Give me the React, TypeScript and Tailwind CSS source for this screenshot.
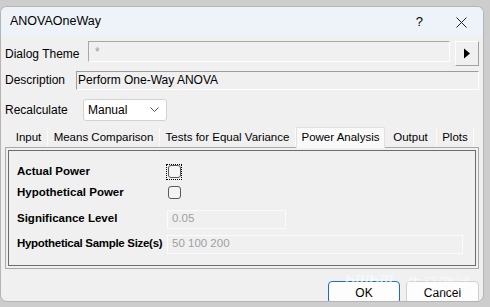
import React from 'react';

const font = { fontFamily: '"Liberation Sans", Arial, sans-serif' };

const tabs = [
  { label: 'Input', w: 'w-[38px]' },
  { label: 'Means Comparison', w: 'w-[112px]' },
  { label: 'Tests for Equal Variance', w: 'w-[136px]' },
  { label: 'Power Analysis', w: 'w-[89px]' },
  { label: 'Output', w: 'w-[52px]' },
  { label: 'Plots', w: 'w-[37px]' },
];

const Checkbox: React.FC<{ focused?: boolean }> = ({ focused }) => (
  <div className={`w-[16px] h-[16px] flex items-center justify-center ${focused ? 'outline-1 outline-dotted outline-black -outline-offset-1' : ''}`}>
    <div className="w-[13px] h-[13px] rounded-[3px] border border-[#5a5a5a] bg-[#f4f4f4]" />
  </div>
);

export default function App() {
  return (
    <div className="w-[490px] h-[307px] bg-[#cdcdcd] pt-[6px] overflow-hidden text-[12px] text-black" style={font}>
      <div className="relative w-[484px] h-[296px] bg-[#f0f0f0] rounded-t-[7px] rounded-b-[7px] border border-[#b4b4b4] flex flex-col overflow-hidden">
        {/* title bar */}
        <div className="h-[29px] bg-[#eef3f9] flex items-center pl-[9px] pr-[16px] shrink-0">
          <span className="text-[12.5px]">ANOVAOneWay</span>
          <span className="ml-auto text-[13px] mr-[33px]">?</span>
          <svg width="11" height="11" viewBox="0 0 11 11" className="mt-[1px]">
            <path d="M0.5 0.5 L10.5 10.5 M10.5 0.5 L0.5 10.5" stroke="#222" strokeWidth="1" />
          </svg>
        </div>

        <div className="flex flex-col px-[4px] pt-[5px] grow">
          {/* dialog theme */}
          <div className="flex items-start h-[26px]">
            <span className="w-[83px] pt-[4px] whitespace-nowrap">Dialog Theme</span>
            <div className="w-[362px] h-[21px] border border-[#a8a8a8] border-r-white border-b-white bg-[#f0f0f0] flex items-center px-[6px] text-[#9a9a9a]">
              *
            </div>
            <div className="ml-[5px] w-[24px] h-[25px] border border-[#a0a0a0] border-t-white border-l-white bg-[#f0f0f0] flex items-center justify-center">
              <svg width="8" height="11" viewBox="0 0 8 11">
                <path d="M1 0.5 L7 5.5 L1 10.5 Z" fill="#000" />
              </svg>
            </div>
          </div>

          {/* description */}
          <div className="flex items-center h-[20px] mt-[3px]">
            <span className="w-[71px]">Description</span>
            <div className="w-[403px] h-[19px] border border-[#9c9c9c] border-r-white border-b-white bg-[#f0f0f0] flex items-center px-[1px]">
              Perform One-Way ANOVA
            </div>
          </div>

          {/* recalculate */}
          <div className="flex items-center h-[23px] mt-[8px]">
            <span className="w-[78px]">Recalculate</span>
            <div className="w-[84px] h-[22px] rounded-[3px] border border-[#d2d2d2] bg-white flex items-center pl-[4px] pr-[7px]">
              <span>Manual</span>
              <svg width="9" height="6" viewBox="0 0 9 6" className="ml-auto">
                <path d="M0.5 0.5 L4.5 4.5 L8.5 0.5" stroke="#555" fill="none" strokeWidth="1" />
              </svg>
            </div>
          </div>

          {/* tabs */}
          <div className="flex items-end h-[22px] mt-[4px] pl-[5px] text-[11.5px]">
            {tabs.map((t) => {
              const active = t.label === 'Power Analysis';
              return (
                <div
                  key={t.label}
                  className={`${t.w} shrink-0 whitespace-nowrap flex items-center justify-center ${
                    active
                      ? 'h-[21px] bg-[#f9f9f9] border border-b-0 border-[#e2e2e2] relative top-[1px]'
                      : 'h-[19px] border-r border-[#fafafa]'
                  }`}
                >
                  {t.label}
                </div>
              );
            })}
          </div>

          {/* panel */}
          <div className="w-[474px] h-[122px] border border-[#a9a9a9] p-[2px]">
            <div className="w-full h-full border border-[#6c6c6c] flex flex-col pl-[8px] pt-[10px] font-bold text-[11.5px]">
              <div className="flex items-center h-[21px]">
                <span className="w-[149px] whitespace-nowrap">Actual Power</span>
                <Checkbox focused />
              </div>
              <div className="flex items-center h-[21px]">
                <span className="w-[149px] whitespace-nowrap">Hypothetical Power</span>
                <Checkbox />
              </div>
              <div className="flex items-center h-[20px] mt-[6px]">
                <span className="w-[150px] whitespace-nowrap">Significance Level</span>
                <div className="w-[119px] h-[19px] border border-[#fbfbfb] flex items-center pl-[4px] font-normal text-[#9f9f9f]">
                  0.05
                </div>
              </div>
              <div className="flex items-center h-[20px] mt-[5px]">
                <span className="w-[150px] whitespace-nowrap tracking-[-0.3px]">Hypothetical Sample Size(s)</span>
                <div className="w-[296px] h-[19px] border border-[#fbfbfb] flex items-center pl-[4px] font-normal text-[#9f9f9f]">
                  50 100 200
                </div>
              </div>
            </div>
          </div>

          {/* buttons */}
          <div className="flex justify-end mt-[12px] gap-[6px]">
            <div className="w-[72px] h-[23px] rounded-[4px] border border-[#1a6fb8] bg-[#fdfdfd] flex items-center justify-center">
              OK
            </div>
            <div className="w-[73px] h-[23px] rounded-[4px] border border-[#d0d0d0] bg-[#fdfdfd] flex items-center justify-center">
              Cancel
            </div>
          </div>
        </div>

        {/* watermark */}
        <div className="absolute left-[343px] top-[262px] flex items-center gap-[14px] text-white/60 pointer-events-none">
          <span className="text-[18px] italic font-bold tracking-tight">bilibili</span>
          <span className="text-[16px]" style={{ fontFamily: '"Noto Sans CJK SC", sans-serif' }}>牛马测试</span>
        </div>
      </div>
    </div>
  );
}
